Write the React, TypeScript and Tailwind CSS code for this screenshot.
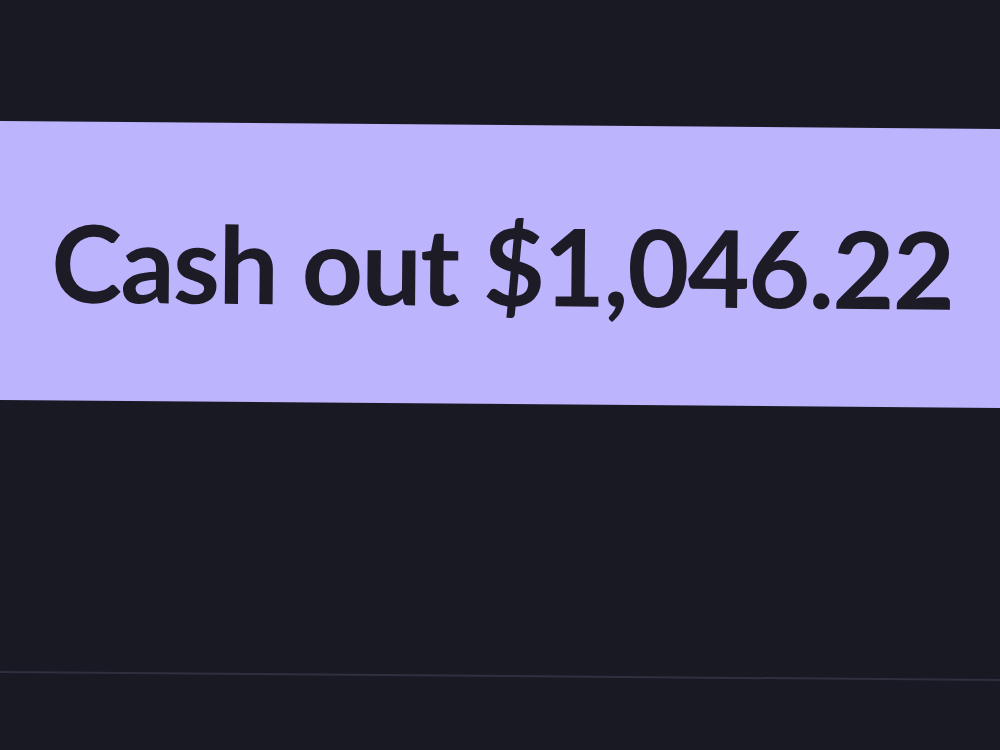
export default function App() {
  return (
    <div className="h-[750px] w-[1000px] overflow-hidden bg-[#191924]">
      <div className="flex h-full w-full origin-center rotate-[0.46deg] flex-col pt-[125px]">
        <button
          type="button"
          className="flex h-[279px] w-[1040px] -ml-[20px] shrink-0 items-center justify-center bg-[#bcb4fd] text-[#1c1b26]"
        >
          <span
            className="ml-[3px] text-[107px] font-bold leading-none tracking-[-1.6px]"
            style={{ fontFamily: 'Lato, "Noto Sans", sans-serif' }}
          >
            Cash out $1,046.22
          </span>
        </button>
        <div className="mt-[271px] h-[2px] w-[1040px] -ml-[20px] bg-[#302f40]" />
      </div>
    </div>
  );
}
